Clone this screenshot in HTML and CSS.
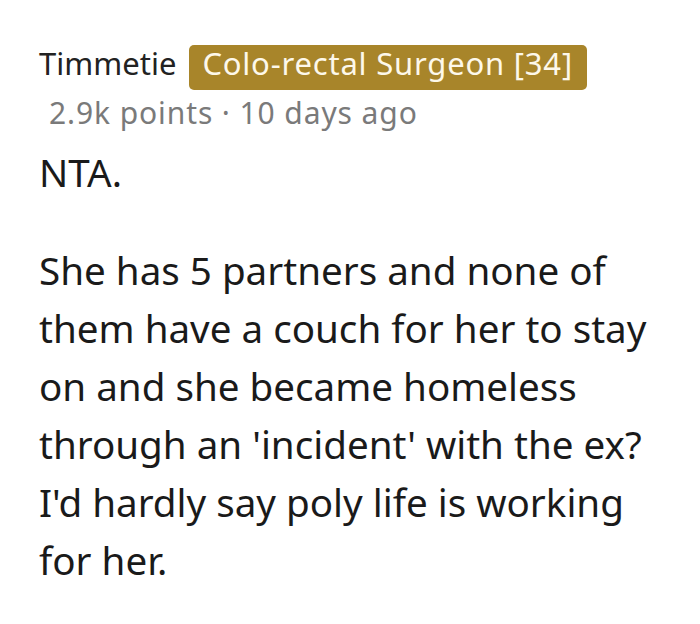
FILE: index.html
```html
<!DOCTYPE html>
<html>
<head>
<meta charset="utf-8">
<link rel="stylesheet" href="styles.css">
</head>
<body>
<div class="comment">
  <div class="header">
    <span class="user">Timmetie</span>
    <span class="flair">Colo-rectal Surgeon [34]</span>
  </div>
  <div class="meta">2.9k points · 10 days ago</div>
  <div class="body">
    <p class="first">NTA.</p>
    <p>She has 5 partners and none of them have a couch for her to stay on and she became homeless through an 'incident' with the ex? I'd hardly say poly life is working for her.</p>
  </div>
</div>
</body>
</html>
```

FILE: styles.css
```css
html, body {
  margin: 0;
  padding: 0;
  background: #ffffff;
}
.comment {
  padding: 45px 40px 0 39px;
  width: 621px;
  color: #1c1c1c;
}
.header {
  display: flex;
  align-items: baseline;
  gap: 13px;
  font-family: "Noto Sans", sans-serif;
}
.user {
  font-size: 31px;
  line-height: 36px;
  color: #222;
}
.flair {
  background: #a8852a;
  color: #fdf8ea;
  font-size: 31px;
  line-height: 36px;
  letter-spacing: 0.8px;
  padding: 0 14px 9px 13px;
  border-radius: 5px;
}
.meta {
  font-family: "Noto Sans", sans-serif;
  font-size: 30px;
  line-height: 40px;
  letter-spacing: 0.9px;
  color: #7a7a7a;
  padding-left: 10px;
  margin-top: 3px;
}
.body {
  font-family: "Noto Sans", sans-serif;
  font-size: 38.6px;
  line-height: 58px;
  color: #1a1a1a;
  margin-top: 10px;
}
.body p {
  margin: 0;
}
.body .first {
  margin-bottom: 40px;
}
```
